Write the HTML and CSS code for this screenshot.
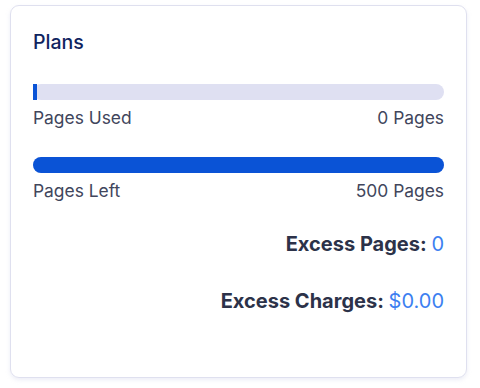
FILE: index.html
```html
<!DOCTYPE html>
<html lang="en">
  <head>
    <meta charset="UTF-8" />
    <meta name="viewport" content="width=device-width, initial-scale=1.0" />
    <title>Plans</title>
    <link rel="stylesheet" href="styles.css">
  </head>
  <body>
    <div class="card">
      <h2 class="card-title">Plans</h2>

      <div class="usage">
        <div class="bar">
          <div class="bar-fill used" style="width: 1%"></div>
        </div>
        <div class="bar-labels">
          <span>Pages Used</span>
          <span>0 Pages</span>
        </div>
      </div>

      <div class="usage">
        <div class="bar">
          <div class="bar-fill left" style="width: 100%"></div>
        </div>
        <div class="bar-labels">
          <span>Pages Left</span>
          <span>500 Pages</span>
        </div>
      </div>

      <div class="summary">
        <p>Excess Pages: <span class="value">0</span></p>
        <p>Excess Charges: <span class="value">$0.00</span></p>
      </div>
    </div>
  </body>
</html>
```

FILE: styles.css
```css
body {
  font-family: Inter, "Noto Sans", sans-serif;
  margin: 0;
  padding: 5px 13px 10px 10px;
  background: #fff;
}
.card {
  height: 373px;
  box-sizing: border-box;
  border: 1px solid #dfe0ef;
  border-radius: 9px;
  padding: 24px 22px;
  box-shadow: 0 2px 4px rgba(200, 202, 230, 0.35);
}
.card-title {
  margin: 0 0 30px;
  font-size: 19.5px;
  line-height: 24px;
  font-weight: 500;
  color: #0f245f;
}
.usage {
  margin-bottom: 27px;
}
.usage:last-of-type {
  margin-bottom: 0;
}
.bar {
  height: 16px;
  border-radius: 8px;
  background-color: #dfe0f2;
}
.bar-fill {
  height: 100%;
  background-color: #0a53d6;
}
.bar-fill.used {
  min-width: 4px;
}
.bar-fill.left {
  border-radius: 8px;
}
.bar-labels {
  display: flex;
  justify-content: space-between;
  margin-top: 6px;
  font-size: 17.4px;
  line-height: 24px;
  color: #41465c;
}
.summary {
  text-align: right;
  margin-top: 28px;
}
.summary p {
  margin: 0 0 31px;
  font-size: 20px;
  line-height: 26px;
  font-weight: 700;
  color: #2c3249;
}
.summary .value {
  font-weight: 400;
  color: #3d7ff1;
}
```
